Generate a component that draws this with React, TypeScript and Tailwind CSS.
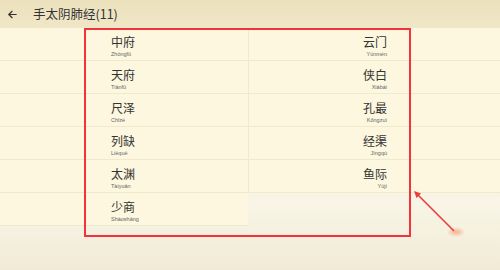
import React from 'react';

const left = [
    { name: '中府', py: 'Zhōngfǔ' },
    { name: '天府', py: 'Tiānfǔ' },
    { name: '尺泽', py: 'Chǐzé' },
    { name: '列缺', py: 'Lièquē' },
    { name: '太渊', py: 'Tàiyuān' },
    { name: '少商', py: 'Shàoshāng' },
];

const right = [
    { name: '云门', py: 'Yúnmén' },
    { name: '侠白', py: 'Xiábái' },
    { name: '孔最', py: 'Kǒngzuì' },
    { name: '经渠', py: 'Jīngqú' },
    { name: '鱼际', py: 'Yújì' },
];

export default function App() {
    // interleave so the grid places left/right cells in rows
    const cells: { name: string; py: string; side: 'l' | 'r' }[] = [];
    for (let i = 0; i < left.length; i++) {
        cells.push({ ...left[i], side: 'l' });
        if (right[i]) cells.push({ ...right[i], side: 'r' });
    }

    return (
        <div
            className="relative w-[500px] h-[270px] overflow-hidden bg-gradient-to-b from-[#ece2bf] via-[#f8f5e7] via-75% to-[#f1ebd6]"
            style={{ fontFamily: '"Noto Sans CJK SC", "Noto Sans", sans-serif' }}
        >
            {/* Header */}
            <div className="h-[28px] flex items-center bg-gradient-to-b from-[#ece1bc] to-[#f0e7c8]">
                <svg className="ml-[7px] w-[11px] h-[11px]" viewBox="0 0 24 24" fill="none" stroke="#333" strokeWidth="2.6" strokeLinecap="round" strokeLinejoin="round">
                    <path d="M20 12H4" />
                    <path d="M11 5l-7 7 7 7" />
                </svg>
                <span className="ml-[15px] text-[12.5px] leading-none text-[#333]">手太阴肺经(11)</span>
            </div>

            {/* Point list */}
            <div className="grid grid-cols-[248px_252px]">
                {cells.map((c, i) => (
                    <div
                        key={i}
                        className={
                            c.side === 'l'
                                ? 'h-[33px] bg-[#fcf7de] border-b border-[#f0e9cb] flex flex-col items-start pl-[111px] pt-[7px]'
                                : 'h-[33px] bg-[#fcf7de] border-b border-l border-[#f0e9cb] flex flex-col items-end pr-[113px] pt-[7px]'
                        }
                    >
                        <span className="text-[12px] leading-[14px] text-[#333]">{c.name}</span>
                        <span className="mt-[2px] text-[5.5px] leading-[7px] text-[#666]" style={{ fontFamily: '"Liberation Sans", sans-serif' }}>
                            {c.py}
                        </span>
                    </div>
                ))}
            </div>

            {/* Annotation box */}
            <div className="absolute left-[84px] top-[28px] w-[327px] h-[209px] border-2 border-[#f2343a] pointer-events-none" />

            {/* Annotation arrow */}
            <svg className="absolute left-0 top-0 w-[500px] h-[270px] pointer-events-none" viewBox="0 0 500 270">
                <defs>
                    <radialGradient id="glow">
                        <stop offset="0%" stopColor="#f7a07a" stopOpacity="0.8" />
                        <stop offset="100%" stopColor="#f7a07a" stopOpacity="0" />
                    </radialGradient>
                </defs>
                <ellipse cx="456" cy="232" rx="9" ry="5" fill="url(#glow)" />
                <line x1="454" y1="231" x2="416" y2="193" stroke="#ee3a3a" strokeWidth="1.6" />
                <path d="M414 191 L421 193.5 L416.5 198 Z" fill="#ee3a3a" />
            </svg>
        </div>
    );
}
